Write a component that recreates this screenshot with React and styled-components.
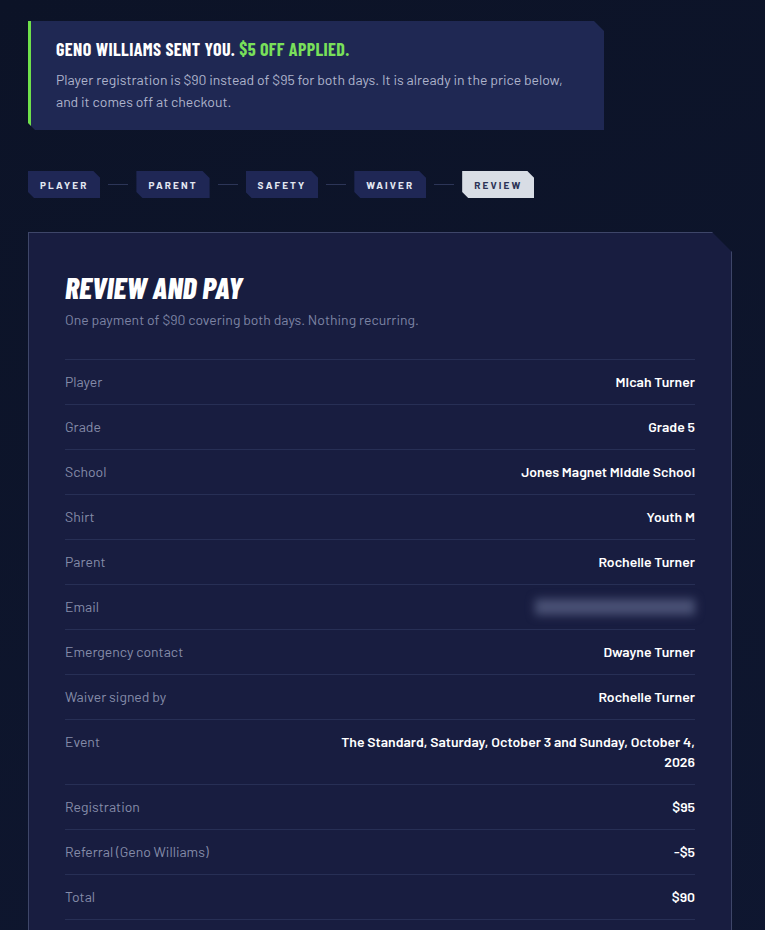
import styled, { createGlobalStyle } from "styled-components";

const GlobalStyle = createGlobalStyle`
  body {
    margin: 0;
    background: #0e1529;
    font-family: "Barlow", Roboto, "Liberation Sans", sans-serif;
    color: #e6e9f3;
  }
`

const Page = styled.div`
  min-height: 100vh;
  background: linear-gradient(160deg, #0c1327 0%, #0f1731 100%);
  padding: 21px 28px 40px;
  box-sizing: border-box;
`

const Banner = styled.div`
  width: 576px;
  box-sizing: border-box;
  background: #1f2853;
  border-left: 3px solid #6fe04b;
  padding: 18px 24px 17px 25px;
  clip-path: polygon(0 0, calc(100% - 10px) 0, 100% 10px, 100% 100%, 7px 100%, 0 calc(100% - 7px));
`

const BannerTitle = styled.div`
  font-family: "Barlow Condensed", "Roboto Condensed", Roboto, sans-serif;
  font-weight: 700;
  font-size: 18px;
  letter-spacing: 0.4px;
  line-height: 20px;
  text-transform: uppercase;
  color: #ffffff;

  em {
    font-style: normal;
    color: #79e05a;
  }
`

const BannerText = styled.p`
  margin: 10px 0 0;
  font-size: 14px;
  line-height: 22px;
  color: #aeb4cc;
`

const Steps = styled.div`
  display: flex;
  align-items: center;
  gap: 8px;
  margin-top: 41px;
`

const Step = styled.div`
  height: 27px;
  display: flex;
  align-items: center;
  padding: 0 12px;
  font-size: 10px;
  font-weight: 700;
  letter-spacing: 2.1px;
  text-transform: uppercase;
  background: ${p => (p.$active ? "#d8dde5" : "#1f2755")};
  color: ${p => (p.$active ? "#2b3256" : "#e3e7f2")};
  clip-path: polygon(0 0, calc(100% - 7px) 0, 100% 7px, 100% 100%, 6px 100%, 0 calc(100% - 6px));
`

const Connector = styled.span`
  width: 20px;
  height: 1px;
  background: #2c3557;
`

const Card = styled.section`
  margin-top: 34px;
  width: 704px;
  box-sizing: border-box;
  background: #181d40;
  border: 1px solid #3e4669;
  padding: 36px 36px 40px;
  clip-path: polygon(0 0, calc(100% - 20px) 0, 100% 20px, 100% 100%, 0 100%);
`

const Title = styled.h1`
  margin: 0;
  font-family: "Barlow Condensed", "Roboto Condensed", Roboto, sans-serif;
  font-weight: 800;
  font-style: italic;
  font-size: 30px;
  line-height: 36px;
  text-transform: uppercase;
  color: #ffffff;
`

const Subtitle = styled.p`
  margin: 5px 0 0;
  font-size: 14px;
  line-height: 20px;
  color: #7d84a4;
`

const Summary = styled.dl`
  margin: 29px 0 0;
  border-top: 1px solid #272f55;
`

const Row = styled.div`
  display: flex;
  justify-content: space-between;
  align-items: flex-start;
  gap: 24px;
  padding: 12px 0;
  border-bottom: 1px solid #272f55;
  font-size: 14px;
  line-height: 20px;
`

const Label = styled.dt`
  color: #858ca9;
  flex-shrink: 0;
`

const Value = styled.dd`
  margin: 0;
  max-width: 370px;
  text-align: right;
  font-weight: 600;
  color: #ffffff;
`

const Hidden = styled.span`
  display: block;
  width: 160px;
  height: 16px;
  margin: 2px 0 2px auto;
  background: #4a5175;
  filter: blur(5px);
`

const PayButton = styled.button`
  margin-top: 32px;
  height: 44px;
  padding: 0 28px;
  border: 0;
  background: #79e05a;
  color: #10162f;
  font-family: inherit;
  font-size: 12px;
  font-weight: 700;
  letter-spacing: 2px;
  text-transform: uppercase;
  clip-path: polygon(0 0, calc(100% - 10px) 0, 100% 10px, 100% 100%, 10px 100%, 0 calc(100% - 10px));
`

const steps = ["Player", "Parent", "Safety", "Waiver", "Review"]

const rows = [
  ["Player", "Micah Turner"],
  ["Grade", "Grade 5"],
  ["School", "Jones Magnet Middle School"],
  ["Shirt", "Youth M"],
  ["Parent", "Rochelle Turner"],
  ["Email", null],
  ["Emergency contact", "Dwayne Turner"],
  ["Waiver signed by", "Rochelle Turner"],
  ["Event", "The Standard, Saturday, October 3 and Sunday, October 4, 2026"],
  ["Registration", "$95"],
  ["Referral (Geno Williams)", "-$5"],
  ["Total", "$90"],
]

function App() {
  return (
    <Page>
      <GlobalStyle />
      <Banner>
        <BannerTitle>
          Geno Williams sent you. <em>$5 off applied.</em>
        </BannerTitle>
        <BannerText>
          Player registration is $90 instead of $95 for both days. It is already in the price below,
          and it comes off at checkout.
        </BannerText>
      </Banner>

      <Steps>
        {steps.map((s, i) => (
          <>
            {i > 0 && <Connector key={"c" + i} />}
            <Step key={s} $active={i === steps.length - 1}>{s}</Step>
          </>
        ))}
      </Steps>

      <Card>
        <Title>Review and pay</Title>
        <Subtitle>One payment of $90 covering both days. Nothing recurring.</Subtitle>
        <Summary>
          {rows.map(([label, value]) => (
            <Row key={label}>
              <Label>{label}</Label>
              <Value>{value === null ? <Hidden /> : value}</Value>
            </Row>
          ))}
        </Summary>
        <PayButton>Pay $90</PayButton>
      </Card>
    </Page>
  );
}

export default App;
